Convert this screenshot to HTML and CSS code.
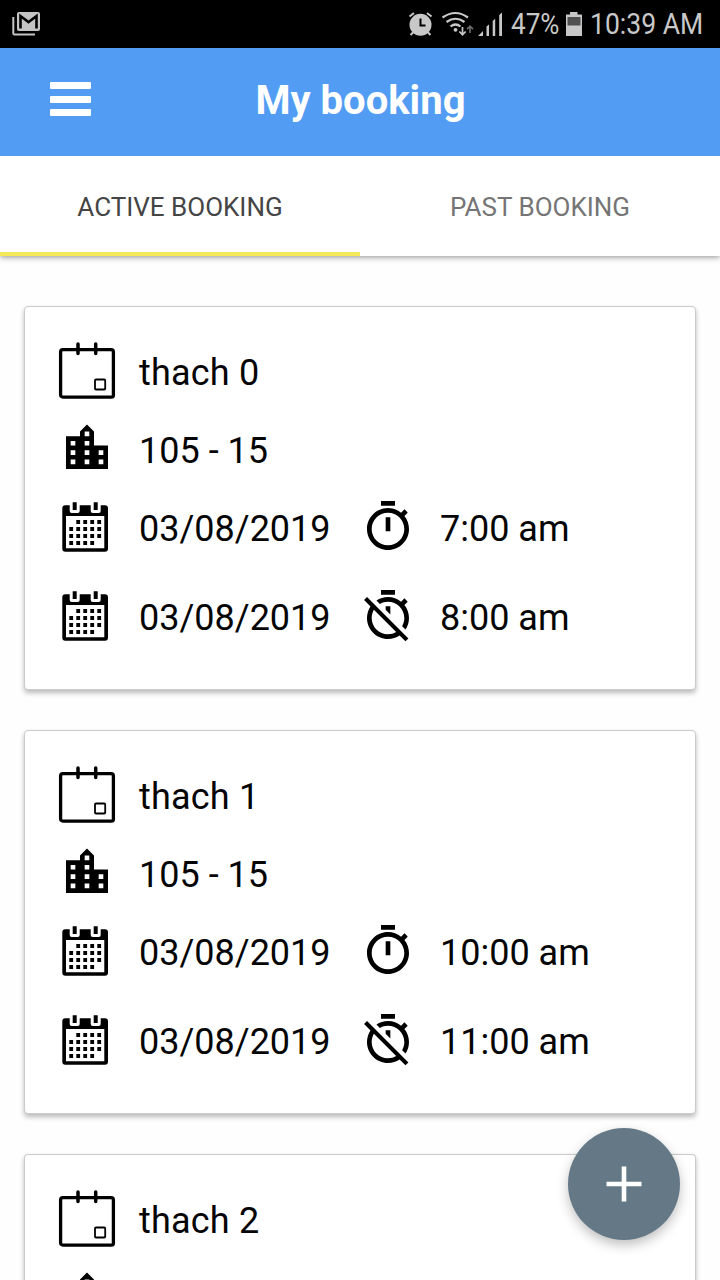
FILE: index.html
```html
<!DOCTYPE html>
<html lang="en">
<head>
<meta charset="utf-8">
<title>My booking</title>
<link rel="stylesheet" href="styles.css">
</head>
<body>
<svg class="defs" aria-hidden="true">
  <symbol id="event" viewBox="0 0 62 78">
    <rect x="4.6" y="15.7" width="52.8" height="47.4" rx="2.2" fill="none" stroke="#000" stroke-width="3.3"/>
    <path d="M22 10v9.5M39.7 10v9.5" fill="none" stroke="#000" stroke-width="3.5" stroke-linecap="round"/>
    <rect x="39" y="45.5" width="10.2" height="10" rx="1" fill="none" stroke="#000" stroke-width="1.8"/>
  </symbol>
  <symbol id="city" viewBox="0 0 62 78">
    <path transform="translate(3 7.9) scale(2.333)" d="M15 11V5l-3-3-3 3v2H3v14h18V11h-6zm-8 8H5v-2h2v2zm0-4H5v-2h2v2zm0-4H5V9h2v2zm6 8h-2v-2h2v2zm0-4h-2v-2h2v2zm0-4h-2V9h2v2zm0-4h-2V5h2v2zm6 12h-2v-2h2v2zm0-4h-2v-2h2v2z"/>
  </symbol>
  <symbol id="calendar" viewBox="0 0 62 78">
    <path fill-rule="evenodd" d="M9 15.3h4.7V21q0 2 2 2h6q2 0 2-2v-5.7h11V21q0 2 2 2h6q2 0 2-2v-5.7H49q3 0 3 3v40.4q0 3-3 3H9.300q-3 0-3-3V18.300q0-3 3-3zM10 26v32.3h38.300V26z"/>
    <path d="M16.700 12.300h4v7.700h-4zM37.700 12.300h4v7.700h-4z"/>
    <path d="M20.300 32H45.100M13.300 39H45.100M13.300 46H45.100M13.300 53H38.100" fill="none" stroke="#000" stroke-width="3.800" stroke-dasharray="3.800 3.200"/>
  </symbol>
  <symbol id="timer" viewBox="0 0 56 78">
    <path transform="translate(0 8.700) scale(2.333)" d="M15 1H9v2h6V1zm-4 13h2V8h-2v6zm8.030-6.610l1.420-1.420c-.43-.51-.9-.99-1.410-1.410l-1.420 1.420C16.070 4.740 14.120 4 12 4c-4.970 0-9 4.030-9 9s4.020 9 9 9 9-4.030 9-9c0-2.120-.74-4.070-1.970-5.610zM12 20c-3.870 0-7-3.130-7-7s3.130-7 7-7 7 3.130 7 7-3.130 7-7 7z"/>
  </symbol>
  <symbol id="timer-off" viewBox="0 0 56 78">
    <path transform="translate(0 8.700) scale(2.333)" d="M19.040 4.550l-1.420 1.420C16.070 4.740 14.120 4 12 4c-1.830 0-3.530.55-4.950 1.480l1.460 1.460C9.530 6.350 10.730 6 12 6c3.870 0 7 3.130 7 7 0 1.270-.35 2.470-.94 3.490l1.450 1.450C20.450 16.530 21 14.830 21 13c0-2.120-.74-4.070-1.970-5.610l1.420-1.420-1.410-1.420zM15 1H9v2h6V1zm-4 8.440l2 2V8h-2v1.440zM3.020 4L1.750 5.270 4.500 8.030C3.550 9.450 3 11.160 3 13c0 4.970 4.020 9 9 9 1.840 0 3.550-.55 4.980-1.500l2.500 2.500 1.270-1.270-7.710-7.710L3.020 4zM12 20c-3.870 0-7-3.130-7-7 0-1.280.35-2.480.95-3.520l9.560 9.560c-1.030.61-2.230.96-3.510.96z"/>
  </symbol>
</svg>

<div class="statusbar">
  <svg class="mail" viewBox="0 0 30 26">
    <path d="M1.300 6v16.300a1.200 1.200 0 0 0 1.200 1.200H23" fill="none" stroke="#c4c4c4" stroke-width="2"/>
    <rect x="5" y="1" width="23" height="19" rx="2" fill="#c4c4c4"/>
    <path d="M8.500 17.500V5L16.500 11 24.500 5v12.500" fill="none" stroke="#000" stroke-width="2.600"/>
  </svg>
  <svg class="indicators" viewBox="408 0 96 48">
    <g fill="none" stroke="#c8c8c8">
      <path d="M409.500 16.500l4.500-3.500M431.500 16.500L427 13M413.500 32l-3 3M427.500 32l3 3" stroke-width="2"/>
      <path d="M442.500 17.500Q455.500 8.500 468 17.500M446.500 22Q455.500 15.500 464.500 22M450.500 26.500Q455.500 22.500 460.500 26.500" stroke-width="2.200"/>
      <path d="M462.500 27v7M459.300 31.500l3.200 3.200 3.200-3.200" stroke-width="1.700"/>
      <path d="M470 33v-7M467 29.200l3-3 3 3" stroke="#6a6a6a" stroke-width="1.700"/>
    </g>
    <circle cx="420.500" cy="24.700" r="11" fill="#c8c8c8"/>
    <path d="M420.500 18.500v7h5" fill="none" stroke="#000" stroke-width="2"/>
    <circle cx="455.500" cy="29.800" r="1.900" fill="#c8c8c8"/>
    <path d="M478 36l5-5v5zM486.500 36v-9.500l2.500-2v11.500zM492.700 36V21l2.500-2.300V36zM499.200 36V15l2.800-2.500V36z" fill="#c8c8c8"/>
  </svg>
  <span class="percent">47%</span>
  <svg class="battery" viewBox="0 0 18 26">
    <path d="M5 1h7.500v2.500H17V25H1V3.500h4z" fill="#c8c8c8"/>
    <path d="M2.500 6h13v8.500h-13z" fill="#505050"/>
  </svg>
  <span class="clock">10:39 AM</span>
</div>

<header class="header">
  <div class="menu"><i></i><i></i><i></i></div>
  <h1 class="title">My booking</h1>
</header>

<nav class="tabs">
  <div class="tab tab-active">ACTIVE BOOKING</div>
  <div class="tab">PAST BOOKING</div>
</nav>

<main class="list">
  <article class="card">
    <div class="row"><svg class="icon"><use href="#event"/></svg><span class="name">thach 0</span></div>
    <div class="row"><svg class="icon"><use href="#city"/></svg><span>105 - 15</span></div>
    <div class="row"><svg class="icon"><use href="#calendar"/></svg><span class="date">03/08/2019</span><svg class="clock-icon"><use href="#timer"/></svg><span>7:00 am</span></div>
    <div class="row row-end"><svg class="icon"><use href="#calendar"/></svg><span class="date">03/08/2019</span><svg class="clock-icon"><use href="#timer-off"/></svg><span>8:00 am</span></div>
  </article>
  <article class="card">
    <div class="row"><svg class="icon"><use href="#event"/></svg><span class="name">thach 1</span></div>
    <div class="row"><svg class="icon"><use href="#city"/></svg><span>105 - 15</span></div>
    <div class="row"><svg class="icon"><use href="#calendar"/></svg><span class="date">03/08/2019</span><svg class="clock-icon"><use href="#timer"/></svg><span>10:00 am</span></div>
    <div class="row row-end"><svg class="icon"><use href="#calendar"/></svg><span class="date">03/08/2019</span><svg class="clock-icon"><use href="#timer-off"/></svg><span>11:00 am</span></div>
  </article>
  <article class="card card-last">
    <div class="row"><svg class="icon"><use href="#event"/></svg><span class="name">thach 2</span></div>
    <div class="row row-cut"><svg class="icon"><use href="#city"/></svg></div>
  </article>
</main>

<div class="fab">
  <svg viewBox="0 0 36 36"><path d="M18 .5v35M.5 18h35" fill="none" stroke="#fff" stroke-width="4.600"/></svg>
</div>
</body>
</html>
```
FILE: styles.css
```css
* {
  box-sizing: border-box;
}

body {
  margin: 0;
  width: 720px;
  height: 1280px;
  overflow: hidden;
  display: flex;
  flex-direction: column;
  background: #fefefe;
  font-family: Roboto, "Liberation Sans", sans-serif;
  color: #050505;
}

.defs {
  display: none;
}

.statusbar {
  flex: none;
  height: 48px;
  display: flex;
  align-items: center;
  background: #000;
  color: #c8c8c8;
  font-size: 30px;
  line-height: 48px;
  white-space: nowrap;
}

.mail {
  width: 30px;
  height: 26px;
  margin-left: 12px;
  margin-right: 366px;
}

.indicators {
  width: 96px;
  height: 48px;
}

.percent,
.clock {
  transform-origin: 0 50%;
}

.percent {
  width: 55px;
  margin-left: 7px;
  transform: scaleX(0.87);
}

.battery {
  width: 18px;
  height: 26px;
  margin-left: -1px;
  margin-bottom: 1px;
}

.clock {
  width: 120px;
  margin-left: 7px;
  transform: scaleX(0.885);
}

.header {
  flex: none;
  height: 108px;
  display: grid;
  grid-template-columns: 160px 1fr 160px;
  align-items: center;
  background: #529df3;
}

.menu {
  display: flex;
  flex-direction: column;
  gap: 6.500px;
  width: 41px;
  margin-left: 50px;
  margin-top: -6px;
}

.menu i {
  height: 7px;
  border-radius: 1px;
  background: #fff;
}

.title {
  margin: 0;
  padding-left: 1px;
  padding-bottom: 2px;
  text-align: center;
  font-size: 40px;
  line-height: 48px;
  font-weight: 700;
  color: #fff;
}

.tabs {
  flex: none;
  height: 100px;
  display: flex;
  background: #fff;
  box-shadow: 0 1px 6px rgba(0, 0, 0, 0.450);
  clip-path: inset(0 0 -12px 0);
}

.tab {
  flex: 1;
  padding-top: 3px;
  border-bottom: 4px solid transparent;
  text-align: center;
  font-size: 26px;
  line-height: 96px;
  color: #757575;
}

.tab-active {
  border-color: #f6e957;
  color: #454545;
}

.list {
  flex: none;
  display: flex;
  flex-direction: column;
  gap: 40px;
  padding: 50px 24px 0;
}

.card {
  flex: none;
  height: 384px;
  padding: 27px 31px 0;
  border: 1px solid #cbcbcb;
  border-radius: 4px;
  background: #fff;
  box-shadow: 0 3px 5px rgba(0, 0, 0, 0.270);
}

.card-last {
  height: 126px;
  border-bottom: 0;
  border-radius: 4px 4px 0 0;
}

.row {
  height: 78px;
  display: flex;
  align-items: center;
  font-size: 36px;
  line-height: 42px;
  white-space: nowrap;
}

.row-end {
  height: 100px;
}

.row-cut {
  height: 20px;
  align-items: flex-start;
  overflow: hidden;
}

.icon {
  flex: none;
  width: 62px;
  height: 78px;
  margin-right: 21px;
}

.name {
  letter-spacing: 0.200px;
}

.date {
  width: 221px;
}

.clock-icon {
  flex: none;
  width: 56px;
  height: 78px;
  margin-right: 24px;
}

.fab {
  position: absolute;
  right: 40px;
  bottom: 40px;
  width: 112px;
  height: 112px;
  border-radius: 50%;
  display: flex;
  align-items: center;
  justify-content: center;
  background: #647886;
  box-shadow: 0 5px 12px rgba(0, 0, 0, 0.250);
}

.fab svg {
  width: 36px;
  height: 36px;
}
```
